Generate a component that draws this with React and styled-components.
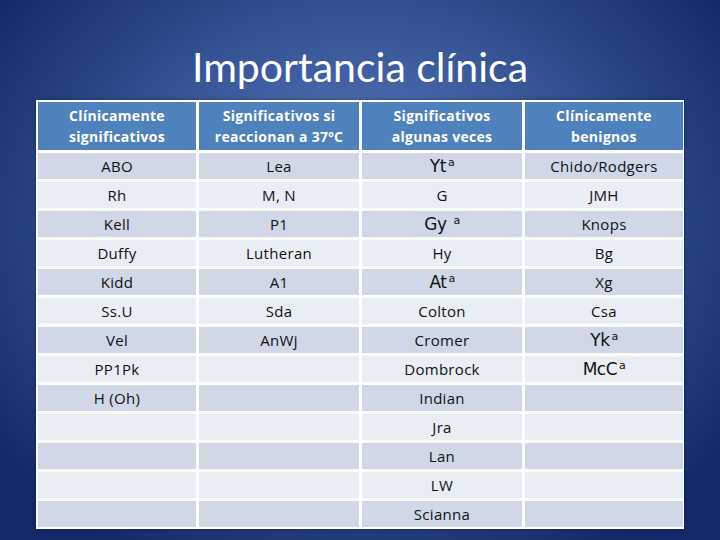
import styled, { createGlobalStyle } from "styled-components";

const GlobalStyle = createGlobalStyle`
  html, body {
    margin: 0;
    padding: 0;
  }
  body {
    font-family: Lato, "Open Sans", sans-serif;
  }
`;

const Slide = styled.div`
  width: 720px;
  height: 540px;
  overflow: hidden;
  background: radial-gradient(ellipse 62% 70% at 50% 42%, #5b7cbf 0%, #4565a8 35%, #2a4586 70%, #14296a 100%);
  display: flex;
  flex-direction: column;
  align-items: center;
`;

const Title = styled.h1`
  margin: 0;
  height: 100px;
  box-sizing: border-box;
  padding-top: 40px;
  color: #fff;
  font-family: Lato, sans-serif;
  font-weight: 400;
  font-size: 41px;
  line-height: 54px;
`;

const Table = styled.div`
  width: 648px;
  box-sizing: border-box;
  display: grid;
  grid-template-columns: 158px 160px 160px 158px;
  grid-template-rows: 48px repeat(13, 26px);
  gap: 3px;
  padding: 2px;
  background: #fff;
  box-shadow: 0 0 4px rgba(0, 0, 0, 0.35);
`;

const HeadCell = styled.div`
  background: #4f81bd;
  color: #fff;
  font-family: "Open Sans", sans-serif;
  font-weight: 700;
  font-size: 14px;
  line-height: 21px;
  letter-spacing: 0.3px;
  display: flex;
  align-items: center;
  justify-content: center;
  text-align: center;
`;

const Cell = styled.div`
  background: ${(p) => (p.$dark ? "#d0d8e8" : "#e9edf4")};
  color: #111;
  font-family: "Open Sans", sans-serif;
  font-size: 15px;
  letter-spacing: 0.3px;
  display: flex;
  align-items: center;
  justify-content: center;
  white-space: pre;
`;

const Big = styled.span`
  font-family: "DejaVu Sans", sans-serif;
  font-size: 17px;
  letter-spacing: -0.5px;
  sup {
    font-size: 11px;
    vertical-align: 6px;
    line-height: 0;
    margin-left: 2px;
  }
`;

const Ant = ({ base, space }) => (
  <Big>
    {base}
    {space ? " " : ""}
    <sup>a</sup>
  </Big>
);

const headers = [
  ["Clínicamente", "significativos"],
  ["Significativos si", "reaccionan a 37ºC"],
  ["Significativos", "algunas veces"],
  ["Clínicamente", "benignos"],
];

const rows = [
  ["ABO", "Lea", <Ant base="Yt" />, "Chido/Rodgers"],
  ["Rh", "M, N", "G", "JMH"],
  ["Kell", "P1", <Ant base="Gy" space />, "Knops"],
  ["Duffy", "Lutheran", "Hy", "Bg"],
  ["Kidd", "A1", <Ant base="At" />, "Xg"],
  ["Ss.U", "Sda", "Colton", "Csa"],
  ["Vel", "AnWj", "Cromer", <Ant base="Yk" />],
  ["PP1Pk", "", "Dombrock", <Ant base="McC" />],
  ["H (Oh)", "", "Indian", ""],
  ["", "", "Jra", ""],
  ["", "", "Lan", ""],
  ["", "", "LW", ""],
  ["", "", "Scianna", ""],
];

export default function App() {
  return (
    <>
      <GlobalStyle />
      <Slide>
        <Title>Importancia clínica</Title>
        <Table>
          {headers.map((h, i) => (
            <HeadCell key={"h" + i}>
              {h[0]}
              <br />
              {h[1]}
            </HeadCell>
          ))}
          {rows.map((row, r) =>
            row.map((c, i) => (
              <Cell key={r + "-" + i} $dark={r % 2 === 0}>
                {c}
              </Cell>
            ))
          )}
        </Table>
      </Slide>
    </>
  );
}
